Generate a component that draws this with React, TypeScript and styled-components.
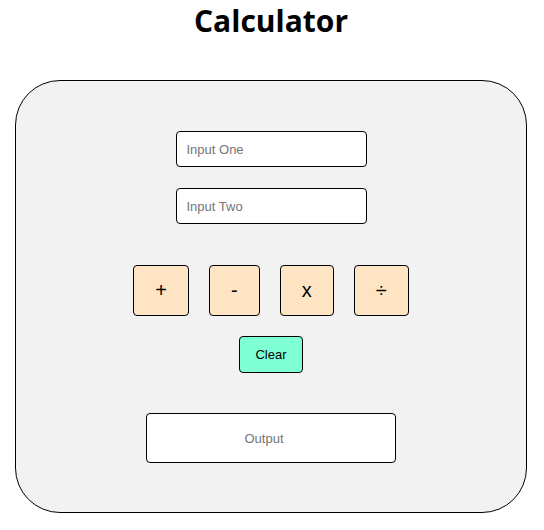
import styled, { createGlobalStyle } from "styled-components";

const GlobalStyle = createGlobalStyle`
  * {
    box-sizing: border-box;
  }
  body {
    margin: 0;
    background: #ffffff;
    font-family: "Liberation Sans", Arial, sans-serif;
  }
`;

const operators = ["+", "-", "x", "÷"];

export default function App() {
  return (
    <>
      <GlobalStyle />
      <Page>
        <Title>Calculator</Title>
        <Panel>
          <Field placeholder="Input One" />
          <Field placeholder="Input Two" />
          <Operators>
            {operators.map((op) => (
              <OpButton key={op}>{op}</OpButton>
            ))}
          </Operators>
          <ClearButton>Clear</ClearButton>
          <Output readOnly placeholder="Output" />
        </Panel>
      </Page>
    </>
  );
}

const Page = styled.div`
  display: flex;
  flex-direction: column;
  align-items: center;
  padding: 0 17px 0 15px;
`;

const Title = styled.h1`
  margin: 0;
  height: 80px;
  padding-top: 1px;
  font-family: "Open Sans", "Noto Sans", sans-serif;
  font-weight: 700;
  font-size: 30px;
  line-height: 40px;
  color: #000;
`;

const Panel = styled.div`
  width: 512px;
  display: flex;
  flex-direction: column;
  align-items: center;
  padding: 50px 0 49px;
  background: #f2f2f2;
  border: 1px solid #000;
  border-radius: 45px;
`;

const Field = styled.input`
  width: 191px;
  height: 36px;
  padding: 0 10px;
  margin-bottom: 21px;
  border: 1px solid #000;
  border-radius: 4px;
  background: #fff;
  font-family: "Liberation Sans", Arial, sans-serif;
  font-size: 13px;
  outline: none;

  &::placeholder {
    color: #757575;
  }
`;

const Operators = styled.div`
  display: flex;
  gap: 20px;
  margin-top: 20px;
  margin-bottom: 20px;
`;

const OpButton = styled.button`
  height: 51px;
  padding: 0 21px;
  border: 1px solid #000;
  border-radius: 4px;
  background: #ffe4c4;
  font-family: "Liberation Sans", Arial, sans-serif;
  font-size: 20px;
  color: #000;
`;

const ClearButton = styled.button`
  height: 37px;
  padding: 0 15px;
  margin-bottom: 40px;
  border: 1px solid #000;
  border-radius: 4px;
  background: #7fffd4;
  font-family: "Liberation Sans", Arial, sans-serif;
  font-size: 13px;
  color: #000;
`;

const Output = styled.input`
  width: 250px;
  height: 50px;
  padding: 0 14px 0 0;
  border: 1px solid #000;
  border-radius: 4px;
  background: #fff;
  text-align: center;
  font-family: "Liberation Sans", Arial, sans-serif;
  font-size: 13px;
  outline: none;

  &::placeholder {
    color: #757575;
  }
`;
